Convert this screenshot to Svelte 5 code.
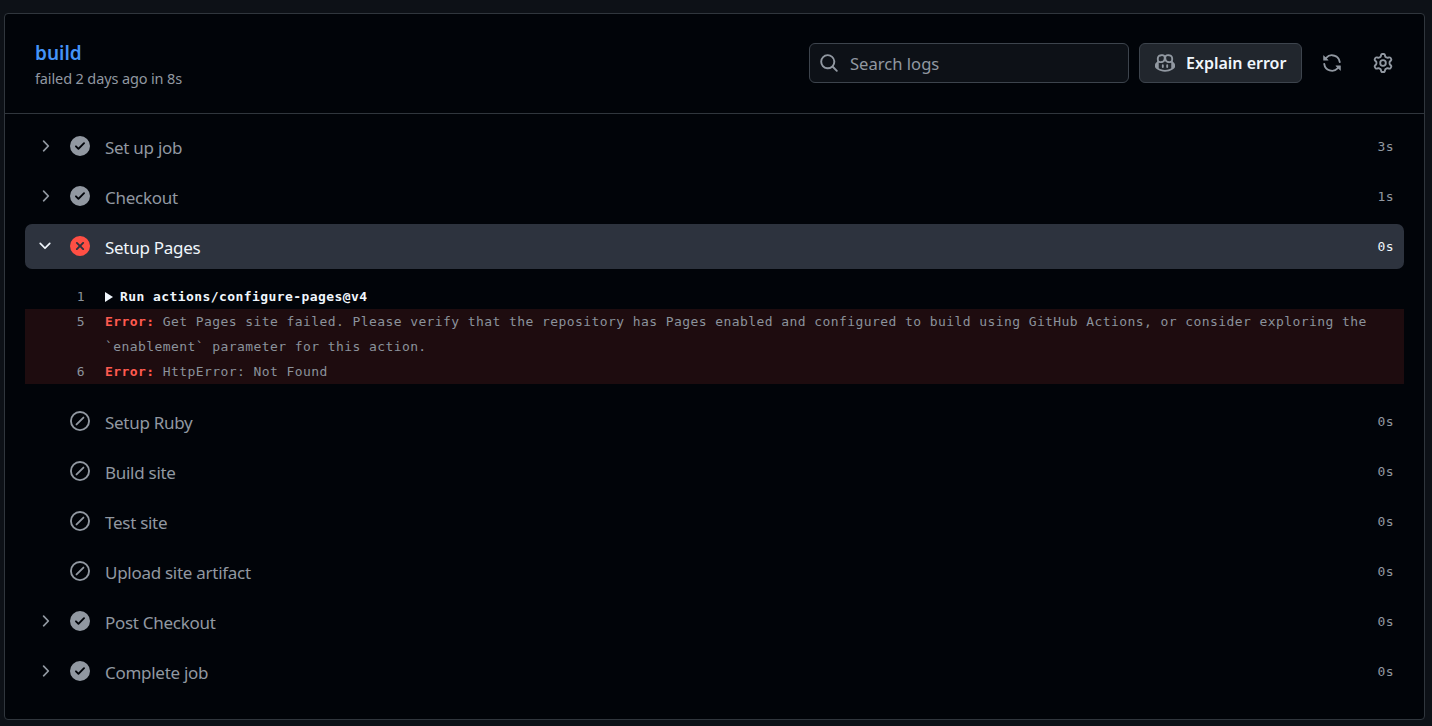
<script lang="ts">
	const icons = {
		right: 'M6.22 3.22a.75.75 0 0 1 1.06 0l4.25 4.25a.75.75 0 0 1 0 1.06l-4.25 4.25a.751.751 0 0 1-1.042-.018.751.751 0 0 1-.018-1.042L9.94 8 6.22 4.28a.75.75 0 0 1 0-1.06Z',
		down: 'M12.78 5.22a.749.749 0 0 1 0 1.06l-4.25 4.25a.749.749 0 0 1-1.06 0L3.22 6.28a.749.749 0 1 1 1.06-1.06L8 8.939l3.72-3.719a.749.749 0 0 1 1.06 0Z',
		success: 'M8 16A8 8 0 1 1 8 0a8 8 0 0 1 0 16Zm3.78-9.72a.751.751 0 0 0-.018-1.042.751.751 0 0 0-1.042-.018L6.75 9.19 5.28 7.72a.751.751 0 0 0-1.042.018.751.751 0 0 0-.018 1.042l2 2a.75.75 0 0 0 1.06 0Z',
		failure: 'M2.343 13.657A8 8 0 1 1 13.658 2.343 8 8 0 0 1 2.343 13.657ZM6.03 4.97a.751.751 0 0 0-1.042.018.751.751 0 0 0-.018 1.042L6.94 8 4.97 9.97a.749.749 0 0 0 .326 1.275.749.749 0 0 0 .734-.215L8 9.06l1.97 1.97a.749.749 0 0 0 1.275-.326.749.749 0 0 0-.215-.734L9.06 8l1.97-1.97a.749.749 0 0 0-.326-1.275.749.749 0 0 0-.734.215L8 6.94Z',
		skipped: 'M8 0a8 8 0 1 1 0 16A8 8 0 0 1 8 0ZM1.5 8a6.5 6.5 0 1 0 13 0 6.5 6.5 0 0 0-13 0Zm9.78-2.22-5.5 5.5a.749.749 0 0 1-1.275-.326.749.749 0 0 1 .215-.734l5.5-5.5a.751.751 0 0 1 1.042.018.751.751 0 0 1 .018 1.042Z',
		search: 'M10.68 11.74a6 6 0 0 1-7.922-8.982 6 6 0 0 1 8.982 7.922l3.04 3.04a.749.749 0 0 1-.326 1.275.749.749 0 0 1-.734-.215ZM11.5 7a4.499 4.499 0 1 0-8.997 0A4.499 4.499 0 0 0 11.5 7Z',
		sync: 'M1.705 8.005a.75.75 0 0 1 .834.656 5.5 5.5 0 0 0 9.592 2.97l-1.204-1.204a.25.25 0 0 1 .177-.427h3.646a.25.25 0 0 1 .25.25v3.646a.25.25 0 0 1-.427.177l-1.38-1.38A7.002 7.002 0 0 1 1.05 8.84a.75.75 0 0 1 .656-.834ZM8 2.5a5.487 5.487 0 0 0-4.131 1.869l1.204 1.204A.25.25 0 0 1 4.896 6H1.25A.25.25 0 0 1 1 5.75V2.104a.25.25 0 0 1 .427-.177l1.38 1.38A7.002 7.002 0 0 1 14.95 7.16a.75.75 0 0 1-1.49.178A5.5 5.5 0 0 0 8 2.5Z',
		gear: 'M8 0a8.2 8.2 0 0 1 .701.031C9.444.095 9.99.645 10.16 1.29l.288 1.107c.018.066.079.158.212.224.231.114.454.243.668.386.123.082.233.09.299.071l1.103-.303c.644-.176 1.392.021 1.82.63.27.385.506.792.704 1.218.315.675.111 1.422-.364 1.891l-.814.806c-.049.048-.098.147-.088.294.016.257.016.515 0 .772-.01.147.038.246.088.294l.814.806c.475.469.679 1.216.364 1.891a7.977 7.977 0 0 1-.704 1.217c-.428.61-1.176.807-1.82.63l-1.102-.302c-.067-.019-.177-.011-.3.071a5.909 5.909 0 0 1-.668.386c-.133.066-.194.158-.211.224l-.29 1.106c-.168.646-.715 1.196-1.458 1.26a8.006 8.006 0 0 1-1.402 0c-.743-.064-1.289-.614-1.458-1.26l-.289-1.106c-.018-.066-.079-.158-.212-.224a5.738 5.738 0 0 1-.668-.386c-.123-.082-.233-.09-.299-.071l-1.103.303c-.644.176-1.392-.021-1.82-.63a8.12 8.12 0 0 1-.704-1.218c-.315-.675-.111-1.422.363-1.891l.815-.806c.05-.048.098-.147.088-.294a6.214 6.214 0 0 1 0-.772c.01-.147-.038-.246-.088-.294l-.815-.806C.635 6.045.431 5.298.746 4.623a7.92 7.92 0 0 1 .704-1.217c.428-.61 1.176-.807 1.82-.63l1.102.302c.067.019.177.011.3-.071.214-.143.437-.272.668-.386.133-.066.194-.158.211-.224l.29-1.106C6.009.645 6.556.095 7.299.03 7.53.01 7.764 0 8 0Zm-.571 1.525c-.036.003-.108.036-.137.146l-.289 1.105c-.147.561-.549.967-.998 1.189-.173.086-.34.183-.5.29-.417.278-.97.423-1.529.27l-1.103-.303c-.109-.03-.175.016-.195.045-.22.312-.412.644-.573.99-.014.031-.021.11.059.19l.815.806c.411.406.562.957.53 1.456a4.709 4.709 0 0 0 0 .582c.032.499-.119 1.05-.53 1.456l-.815.806c-.081.08-.073.159-.059.19.162.346.353.677.573.989.02.03.085.076.195.046l1.102-.303c.56-.153 1.113-.008 1.53.27.161.107.328.204.501.29.447.222.85.629.997 1.189l.289 1.105c.029.109.101.143.137.146a6.6 6.6 0 0 0 1.142 0c.036-.003.108-.036.137-.146l.289-1.105c.147-.561.549-.967.998-1.189.173-.086.34-.183.5-.29.417-.278.97-.423 1.529-.27l1.103.303c.109.029.175-.016.195-.045.22-.313.411-.644.573-.99.014-.031.021-.11-.059-.19l-.815-.806c-.411-.406-.562-.957-.53-1.456a4.709 4.709 0 0 0 0-.582c-.032-.499.119-1.05.53-1.456l.815-.806c.081-.08.073-.159.059-.19a6.464 6.464 0 0 0-.573-.989c-.02-.03-.085-.076-.195-.046l-1.102.303c-.56.153-1.113.008-1.53-.27a4.44 4.44 0 0 0-.501-.29c-.447-.222-.85-.629-.997-1.189l-.289-1.105c-.029-.11-.101-.143-.137-.146a6.6 6.6 0 0 0-1.142 0ZM11 8a3 3 0 1 1-6 0 3 3 0 0 1 6 0ZM9.5 8a1.5 1.5 0 1 0-3.001.001A1.5 1.5 0 0 0 9.5 8Z',
		copilot: 'M7.998 15.035c-4.562 0-7.873-2.914-7.998-3.749V9.338c.085-.628.677-1.686 1.588-2.065.013-.07.024-.143.036-.218.029-.183.06-.384.126-.612-.201-.508-.254-1.084-.254-1.656 0-.87.128-1.769.693-2.484.579-.733 1.494-1.124 2.724-1.261 1.206-.134 2.262.034 2.944.765.05.053.096.108.139.165.044-.057.094-.112.143-.165.682-.731 1.738-.899 2.944-.765 1.23.137 2.145.528 2.724 1.261.566.715.693 1.614.693 2.484 0 .572-.053 1.148-.254 1.656.066.228.098.429.126.612.012.076.024.148.037.218.924.385 1.522 1.471 1.591 2.095v1.872c0 .766-3.351 3.795-8.002 3.795Zm0-1.485c2.28 0 4.584-1.11 5.002-1.433V7.862l-.023-.116c-.49.21-1.075.291-1.727.291-1.146 0-2.059-.327-2.71-.991A3.222 3.222 0 0 1 8 6.303a3.24 3.24 0 0 1-.544.743c-.65.664-1.563.991-2.71.991-.652 0-1.236-.081-1.727-.291l-.023.116v4.255c.419.323 2.722 1.433 5.002 1.433ZM6.762 2.83c-.193-.206-.637-.413-1.682-.297-1.019.113-1.479.404-1.713.7-.247.312-.369.789-.369 1.554 0 .793.129 1.171.308 1.371.162.181.519.379 1.442.379.853 0 1.339-.235 1.638-.54.315-.322.527-.827.617-1.553.117-.935-.037-1.395-.241-1.614Zm4.155-.297c-1.044-.116-1.488.091-1.681.297-.204.219-.359.679-.242 1.614.091.726.303 1.231.618 1.553.299.305.784.54 1.638.54.922 0 1.28-.198 1.442-.379.179-.2.308-.578.308-1.371 0-.765-.123-1.242-.37-1.554-.233-.296-.693-.587-1.713-.7Z M6.25 9.037a.75.75 0 0 1 .75.75v1.501a.75.75 0 0 1-1.5 0V9.787a.75.75 0 0 1 .75-.75Zm4.25.75v1.501a.75.75 0 0 1-1.5 0V9.787a.75.75 0 0 1 1.5 0Z'
	};

	const before = [
		{ name: 'Set up job', time: '3s', status: 'success' },
		{ name: 'Checkout', time: '1s', status: 'success' }
	];
	const after = [
		{ name: 'Setup Ruby', time: '0s', status: 'skipped' },
		{ name: 'Build site', time: '0s', status: 'skipped' },
		{ name: 'Test site', time: '0s', status: 'skipped' },
		{ name: 'Upload site artifact', time: '0s', status: 'skipped' },
		{ name: 'Post Checkout', time: '0s', status: 'success' },
		{ name: 'Complete job', time: '0s', status: 'success' }
	];
</script>

{#snippet icon(d: string, size: number, cls: string)}
	<svg class={cls} width={size} height={size} viewBox="0 0 16 16" fill="currentColor" aria-hidden="true"><path {d} /></svg>
{/snippet}

{#snippet step(s: { name: string; time: string; status: string })}
	<div class="step">
		<span class="chevron">
			{#if s.status !== 'skipped'}
				{@render icon(icons.right, 18, '')}
			{/if}
		</span>
		{@render icon(icons[s.status], 20, 'status')}
		<span class="step-name">{s.name}</span>
		<span class="step-time">{s.time}</span>
	</div>
{/snippet}

<div class="page">
	<main class="card">
		<header class="head">
			<div class="title">
				<h1>build</h1>
				<p>failed 2 days ago in 8s</p>
			</div>
			<div class="actions">
				<label class="search">
					{@render icon(icons.search, 20, 'search-icon')}
					<input type="text" placeholder="Search logs" />
				</label>
				<button class="explain">
					{@render icon(icons.copilot, 20, 'copilot')}
					Explain error
				</button>
				<button class="tool">{@render icon(icons.sync, 20, '')}</button>
				<button class="tool">{@render icon(icons.gear, 20, '')}</button>
			</div>
		</header>

		<section class="steps">
			{#each before as s (s.name)}
				{@render step(s)}
			{/each}

			<div class="step open">
				<span class="chevron">{@render icon(icons.down, 18, '')}</span>
				{@render icon(icons.failure, 20, 'status failed')}
				<span class="step-name">Setup Pages</span>
				<span class="step-time">0s</span>
			</div>

			<div class="log">
				<div class="line">
					<span class="num">1</span>
					<span class="txt run"><span class="tri"></span>Run actions/configure-pages@v4</span>
				</div>
				<div class="errors">
					<div class="line">
						<span class="num">5</span>
						<span class="txt"><b>Error:</b> Get Pages site failed. Please verify that the repository has Pages enabled and configured to build using GitHub Actions, or consider exploring the `enablement` parameter for this action.</span>
					</div>
					<div class="line">
						<span class="num">6</span>
						<span class="txt"><b>Error:</b> HttpError: Not Found</span>
					</div>
				</div>
			</div>

			{#each after as s (s.name)}
				{@render step(s)}
			{/each}
		</section>
	</main>
</div>

<style>
	:global(body) {
		background: #0d1117;
		font-family: 'Noto Sans', 'Open Sans', sans-serif;
	}

	.page {
		height: 726px;
		box-sizing: border-box;
		padding: 13px 7px 6px 4px;
		overflow: hidden;
	}

	.card {
		height: 100%;
		box-sizing: border-box;
		background: #010409;
		border: 1px solid #30363d;
		border-radius: 4px;
	}

	.head {
		height: 100px;
		box-sizing: border-box;
		display: flex;
		align-items: flex-start;
		justify-content: space-between;
		padding: 29px 21px 0 30px;
		border-bottom: 1px solid #30363d;
	}

	.title {
		margin-top: -1px;
	}

	h1 {
		margin: 0;
		font-size: 19px;
		line-height: 22px;
		font-weight: 600;
		color: #4493f8;
	}

	.title p {
		margin: 4px 0 0;
		font-size: 14.5px;
		line-height: 20px;
		letter-spacing: -0.13px;
		color: #9198a1;
	}

	.actions {
		display: flex;
		align-items: center;
		gap: 10px;
	}

	.search {
		width: 320px;
		height: 40px;
		box-sizing: border-box;
		display: flex;
		align-items: center;
		gap: 11px;
		padding: 0 9px;
		background: #0d1117;
		border: 1px solid #3d444d;
		border-radius: 6px;
		color: #9198a1;
	}

	.search-icon {
		flex: none;
	}

	input {
		flex: 1;
		min-width: 0;
		border: 0;
		padding: 0;
		outline: 0;
		background: transparent;
		font: inherit;
		font-size: 16.6px;
		color: #9198a1;
	}

	input::placeholder {
		color: #9198a1;
		opacity: 1;
	}

	button {
		font: inherit;
		border: 0;
		background: none;
		padding: 0;
	}

	.explain {
		width: 163px;
		height: 40px;
		box-sizing: border-box;
		display: flex;
		align-items: center;
		gap: 11px;
		padding: 0 0 0 15px;
		margin-right: -1px;
		background: #21262d;
		border: 1px solid #3d444d;
		border-radius: 6px;
		color: #f0f6fc;
		font-size: 16px;
		font-weight: 600;
	}

	.copilot {
		color: #9198a1;
		flex: none;
	}

	.tool {
		width: 41px;
		height: 40px;
		display: flex;
		align-items: center;
		justify-content: center;
		color: #9198a1;
	}

	.steps {
		padding: 10px 20px 0;
		display: flex;
		flex-direction: column;
		gap: 5px;
	}

	.step {
		height: 45px;
		box-sizing: border-box;
		display: flex;
		align-items: center;
		color: #9198a1;
		border-radius: 7px;
		padding: 0 10px 1px 0;
	}

	.step.open {
		background: #2d333e;
		color: #f0f6fc;
	}

	.chevron {
		width: 40px;
		margin-right: 5px;
		display: flex;
		justify-content: center;
		align-items: center;
		flex: none;
	}

	.status {
		flex: none;
	}

	.status.failed {
		color: #ff4f44;
	}

	.step-name {
		flex: 1;
		margin-left: 15px;
		font-size: 17px;
		letter-spacing: -0.28px;
		position: relative;
		top: 1px;
	}

	.step-time {
		font-family: 'DejaVu Sans Mono', 'Liberation Mono', monospace;
		font-size: 13px;
		letter-spacing: 0.42px;
	}

	.log {
		padding: 10px 0 10px;
		font-family: 'DejaVu Sans Mono', 'Liberation Mono', monospace;
		font-size: 13px;
		letter-spacing: 0.42px;
		line-height: 25px;
		color: #8b929b;
	}

	.errors {
		background: #1e0c0f;
	}

	.line {
		display: flex;
	}

	.num {
		width: 60px;
		flex: none;
		text-align: right;
		color: #8b929b;
	}

	.txt {
		margin-left: 20px;
		flex: 1;
		padding-right: 25px;
	}

	.run {
		color: #f0f6fc;
		font-weight: 700;
		display: flex;
		align-items: center;
	}

	.tri {
		flex: none;
		width: 0;
		height: 0;
		border-left: 8px solid #f0f6fc;
		border-top: 5px solid transparent;
		border-bottom: 5px solid transparent;
		margin-right: 7px;
	}

	b {
		color: #ff5a4f;
		font-weight: 700;
	}
</style>
